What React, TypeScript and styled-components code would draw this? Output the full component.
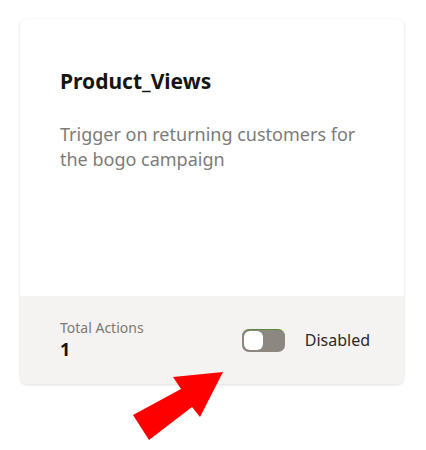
import React from "react";
import styled, { createGlobalStyle } from "styled-components";

const Global = createGlobalStyle`
  html, body { margin: 0; padding: 0; background: #ffffff; }
  body { font-family: "Noto Sans", "Open Sans", sans-serif; }
`;

const Page = styled.div`
  position: relative;
  width: 426px;
  height: 450px;
  padding: 19px 0 0 20px;
  box-sizing: border-box;
`;

const Card = styled.div`
  width: 384px;
  height: 365px;
  border-radius: 7px;
  background: #ffffff;
  box-shadow: 0 1px 3px rgba(0, 0, 0, 0.12), 0 0 1px rgba(0, 0, 0, 0.08);
  display: flex;
  flex-direction: column;
  overflow: hidden;
`;

const Body = styled.div`
  flex: 1;
  padding: 48px 40px 0 40px;
  display: flex;
  flex-direction: column;
`;

const Title = styled.h2`
  margin: 0;
  font-size: 21px;
  line-height: 28px;
  font-weight: 700;
  color: #161513;
`;

const Description = styled.p`
  margin: 27px 0 0 0;
  font-size: 18px;
  line-height: 25px;
  color: #7d7b78;
`;

const Footer = styled.div`
  height: 88px;
  background: #f4f3f1;
  display: flex;
  align-items: center;
  padding: 0 34px 0 40px;
`;

const Stat = styled.div`
  flex: 1;
  display: flex;
  flex-direction: column;
`;

const StatLabel = styled.span`
  font-size: 14px;
  line-height: 18px;
  color: #7b7975;
`;

const StatValue = styled.span`
  font-size: 18px;
  line-height: 24px;
  font-weight: 700;
  color: #161513;
`;

const ToggleWrap = styled.label`
  display: flex;
  align-items: center;
  gap: 20px;
`;

const Track = styled.span<{ $on: boolean }>`
  position: relative;
  width: 43px;
  height: 23px;
  border-radius: 7px;
  box-sizing: border-box;
  background: ${(p) => (p.$on ? "#508223" : "#8c8781")};
  border-top: 1px solid #5b8a3c;
`;

const Thumb = styled.span<{ $on: boolean }>`
  position: absolute;
  top: 1px;
  left: ${(p) => (p.$on ? "22px" : "2px")};
  width: 19px;
  height: 19px;
  border-radius: 6px;
  background: #ffffff;
`;

const ToggleText = styled.span`
  font-size: 16px;
  color: #2b2a28;
`;

const Arrow = styled.svg`
  position: absolute;
  left: 0;
  top: 0;
  pointer-events: none;
`;

export default function App() {
  const enabled = false;
  return (
    <>
      <Global />
      <Page>
        <Card>
          <Body>
            <Title>Product_Views</Title>
            <Description>
              Trigger on returning customers for the bogo campaign
            </Description>
          </Body>
          <Footer>
            <Stat>
              <StatLabel>Total Actions</StatLabel>
              <StatValue>1</StatValue>
            </Stat>
            <ToggleWrap>
              <Track $on={enabled}>
                <Thumb $on={enabled} />
              </Track>
              <ToggleText>{enabled ? "Enabled" : "Disabled"}</ToggleText>
            </ToggleWrap>
          </Footer>
        </Card>
        <Arrow width="426" height="450" viewBox="0 0 426 450">
          <polygon
            points="223,372 173,377 181,389 133,415 149,440 192,407 200,417"
            fill="#ff0000"
          />
        </Arrow>
      </Page>
    </>
  );
}
